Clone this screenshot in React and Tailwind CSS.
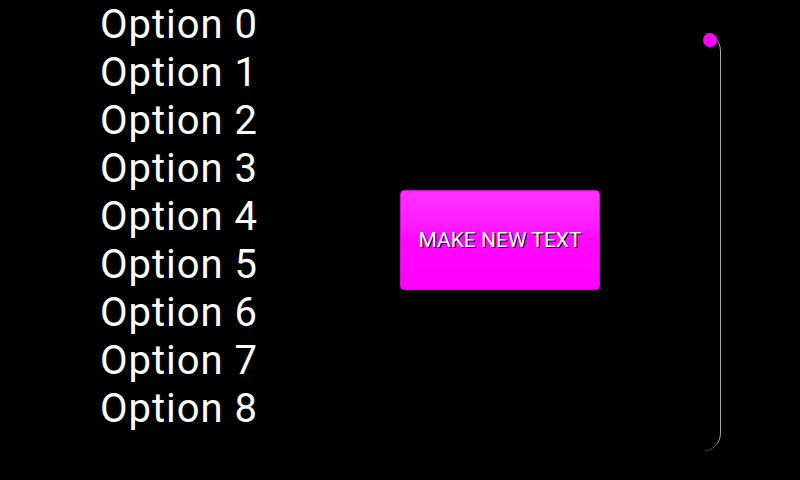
import React from "react";

export default function App() {
  const options = Array.from({ length: 9 }, (_, i) => `Option ${i}`);

  return (
    <div className="w-[800px] h-[480px] bg-black flex font-['Roboto',sans-serif] overflow-hidden">
      {/* Option list */}
      <ul className="w-[400px] pl-[100px] pt-px">
        {options.map((label) => (
          <li key={label} className="text-white text-[40px] leading-[48px] tracking-[1px]">
            {label}
          </li>
        ))}
      </ul>

      {/* Button */}
      <div className="self-center">
        <button className="w-[200px] h-[100px] rounded-[4px] border border-[#e000e0] bg-linear-to-b from-[#ff30ff] via-[#ff08ff] to-[#ff00ff] text-white text-[21px] pt-[2px] [text-shadow:1px_1px_0_#000] flex items-center justify-center">
          MAKE NEW TEXT
        </button>
      </div>

      {/* Vertical slider */}
      <div className="ml-[100px] mt-[33px] relative w-[21px] h-[418px]">
        <div className="w-full h-full border-r border-[#a8a8a8] rounded-r-[18px]" />
        <div className="absolute left-[3px] top-0 w-[14px] h-[14px] rounded-full bg-[#ff00ff]" />
      </div>
    </div>
  );
}
